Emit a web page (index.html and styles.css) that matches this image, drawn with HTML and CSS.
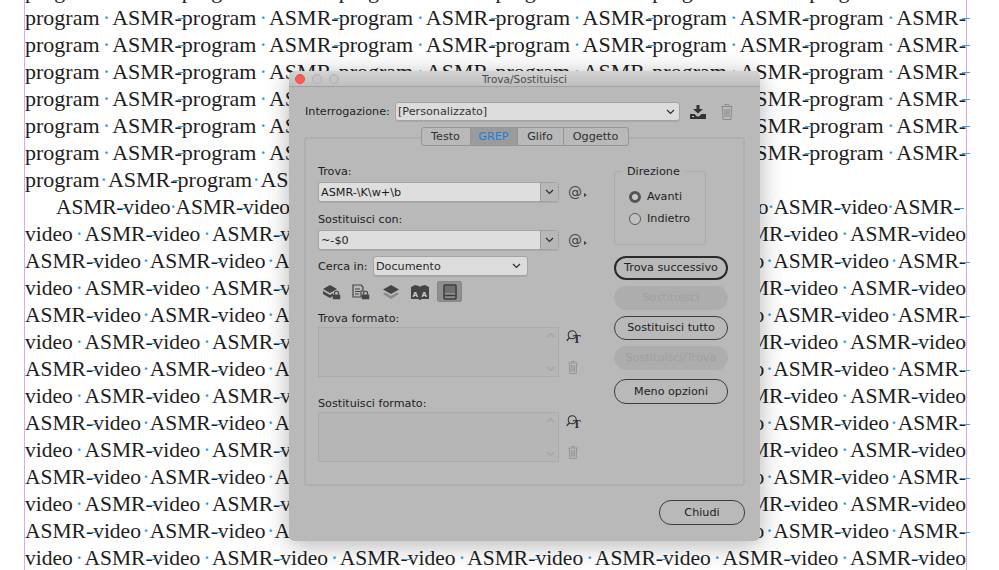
FILE: index.html
```html
<!DOCTYPE html>
<html lang="it">
<head>
<meta charset="utf-8">
<title>Trova/Sostituisci</title>
<link rel="stylesheet" href="styles.css">
</head>
<body>
<svg class="defs" aria-hidden="true">
  <symbol id="trash" viewBox="0 0 12 16"><path d="M4 1.5V.6h4v.9M.5 2.5h11M1.5 2.5l.5 13h8l.5-13M4 5v8M6 5v8M8 5v8" fill="none" stroke="currentColor" stroke-width="1"/></symbol>
  <symbol id="chev" viewBox="0 0 9 6"><path d="M1 1l3.5 3.5L8 1" fill="none" stroke="currentColor" stroke-width="1.2"/></symbol>
  <symbol id="findt" viewBox="0 0 18 16"><circle cx="7" cy="6" r="4.5" fill="none" stroke="currentColor" stroke-width="1.2"/><path d="M3.8 9.4L.8 13" stroke="currentColor" stroke-width="1.4"/><text x="8" y="15" font-family="Liberation Serif, serif" font-size="13" font-weight="700" fill="currentColor">T</text></symbol>
  <symbol id="lock" viewBox="0 0 8 9"><path d="M2 4V2.6a2 2 0 0 1 4 0V4" fill="none" stroke="currentColor" stroke-width="1.2"/><rect y="4" width="8" height="5" rx=".6" fill="currentColor"/></symbol>
</svg>

<div class="page">
  <div class="copy">
    <p class="ln">program <i>·</i> ASMR<b>-</b>program <i>·</i> ASMR<b>-</b>program <i>·</i> ASMR<b>-</b>program <i>·</i> ASMR<b>-</b>program <i>·</i> ASMR<b>-</b>program <i>·</i> ASMR<b>-</b></p>
    <p class="ln">program <i>·</i> ASMR<b>-</b>program <i>·</i> ASMR<b>-</b>program <i>·</i> ASMR<b>-</b>program <i>·</i> ASMR<b>-</b>program <i>·</i> ASMR<b>-</b>program <i>·</i> ASMR<b>-</b></p>
    <p class="ln">program <i>·</i> ASMR<b>-</b>program <i>·</i> ASMR<b>-</b>program <i>·</i> ASMR<b>-</b>program <i>·</i> ASMR<b>-</b>program <i>·</i> ASMR<b>-</b>program <i>·</i> ASMR<b>-</b></p>
    <p class="ln">program <i>·</i> ASMR<b>-</b>program <i>·</i> ASMR<b>-</b>program <i>·</i> ASMR<b>-</b>program <i>·</i> ASMR<b>-</b>program <i>·</i> ASMR<b>-</b>program <i>·</i> ASMR<b>-</b></p>
    <p class="ln">program <i>·</i> ASMR<b>-</b>program <i>·</i> ASMR<b>-</b>program <i>·</i> ASMR<b>-</b>program <i>·</i> ASMR<b>-</b>program <i>·</i> ASMR<b>-</b>program <i>·</i> ASMR<b>-</b></p>
    <p class="ln">program <i>·</i> ASMR<b>-</b>program <i>·</i> ASMR<b>-</b>program <i>·</i> ASMR<b>-</b>program <i>·</i> ASMR<b>-</b>program <i>·</i> ASMR<b>-</b>program <i>·</i> ASMR<b>-</b></p>
    <p class="ln">program <i>·</i> ASMR<b>-</b>program <i>·</i> ASMR<b>-</b>program <i>·</i> ASMR<b>-</b>program <i>·</i> ASMR<b>-</b>program <i>·</i> ASMR<b>-</b>program <i>·</i> ASMR<b>-</b></p>
    <p class="ln short">program<i>·</i>ASMR<b>-</b>program<i>·</i>ASMR<b>-</b>program</p>
    <p class="ln tight">ASMR<b>-</b>video<i>·</i>ASMR<b>-</b>video<i>·</i>ASMR<b>-</b>video<i>·</i>ASMR<b>-</b>video<i>·</i>ASMR<b>-</b>video<i>·</i>ASMR<b>-</b>video<i>·</i>ASMR<b>-</b>video<i>·</i>ASMR<b>-</b></p>
    <p class="ln">video <i>·</i> ASMR<b>-</b>video <i>·</i> ASMR<b>-</b>video <i>·</i> ASMR<b>-</b>video <i>·</i> ASMR<b>-</b>video <i>·</i> ASMR<b>-</b>video <i>·</i> ASMR<b>-</b>video <i>·</i> ASMR<b>-</b>video</p>
    <p class="ln">ASMR<b>-</b>video <i>·</i> ASMR<b>-</b>video <i>·</i> ASMR<b>-</b>video <i>·</i> ASMR<b>-</b>video <i>·</i> ASMR<b>-</b>video <i>·</i> ASMR<b>-</b>video <i>·</i> ASMR<b>-</b>video <i>·</i> ASMR<b>-</b></p>
    <p class="ln">video <i>·</i> ASMR<b>-</b>video <i>·</i> ASMR<b>-</b>video <i>·</i> ASMR<b>-</b>video <i>·</i> ASMR<b>-</b>video <i>·</i> ASMR<b>-</b>video <i>·</i> ASMR<b>-</b>video <i>·</i> ASMR<b>-</b>video</p>
    <p class="ln">ASMR<b>-</b>video <i>·</i> ASMR<b>-</b>video <i>·</i> ASMR<b>-</b>video <i>·</i> ASMR<b>-</b>video <i>·</i> ASMR<b>-</b>video <i>·</i> ASMR<b>-</b>video <i>·</i> ASMR<b>-</b>video <i>·</i> ASMR<b>-</b></p>
    <p class="ln">video <i>·</i> ASMR<b>-</b>video <i>·</i> ASMR<b>-</b>video <i>·</i> ASMR<b>-</b>video <i>·</i> ASMR<b>-</b>video <i>·</i> ASMR<b>-</b>video <i>·</i> ASMR<b>-</b>video <i>·</i> ASMR<b>-</b>video</p>
    <p class="ln">ASMR<b>-</b>video <i>·</i> ASMR<b>-</b>video <i>·</i> ASMR<b>-</b>video <i>·</i> ASMR<b>-</b>video <i>·</i> ASMR<b>-</b>video <i>·</i> ASMR<b>-</b>video <i>·</i> ASMR<b>-</b>video <i>·</i> ASMR<b>-</b></p>
    <p class="ln">video <i>·</i> ASMR<b>-</b>video <i>·</i> ASMR<b>-</b>video <i>·</i> ASMR<b>-</b>video <i>·</i> ASMR<b>-</b>video <i>·</i> ASMR<b>-</b>video <i>·</i> ASMR<b>-</b>video <i>·</i> ASMR<b>-</b>video</p>
    <p class="ln">ASMR<b>-</b>video <i>·</i> ASMR<b>-</b>video <i>·</i> ASMR<b>-</b>video <i>·</i> ASMR<b>-</b>video <i>·</i> ASMR<b>-</b>video <i>·</i> ASMR<b>-</b>video <i>·</i> ASMR<b>-</b>video <i>·</i> ASMR<b>-</b></p>
    <p class="ln">video <i>·</i> ASMR<b>-</b>video <i>·</i> ASMR<b>-</b>video <i>·</i> ASMR<b>-</b>video <i>·</i> ASMR<b>-</b>video <i>·</i> ASMR<b>-</b>video <i>·</i> ASMR<b>-</b>video <i>·</i> ASMR<b>-</b>video</p>
    <p class="ln">ASMR<b>-</b>video <i>·</i> ASMR<b>-</b>video <i>·</i> ASMR<b>-</b>video <i>·</i> ASMR<b>-</b>video <i>·</i> ASMR<b>-</b>video <i>·</i> ASMR<b>-</b>video <i>·</i> ASMR<b>-</b>video <i>·</i> ASMR<b>-</b></p>
    <p class="ln">video <i>·</i> ASMR<b>-</b>video <i>·</i> ASMR<b>-</b>video <i>·</i> ASMR<b>-</b>video <i>·</i> ASMR<b>-</b>video <i>·</i> ASMR<b>-</b>video <i>·</i> ASMR<b>-</b>video <i>·</i> ASMR<b>-</b>video</p>
    <p class="ln">ASMR<b>-</b>video <i>·</i> ASMR<b>-</b>video <i>·</i> ASMR<b>-</b>video <i>·</i> ASMR<b>-</b>video <i>·</i> ASMR<b>-</b>video <i>·</i> ASMR<b>-</b>video <i>·</i> ASMR<b>-</b>video <i>·</i> ASMR<b>-</b></p>
    <p class="ln">video <i>·</i> ASMR<b>-</b>video <i>·</i> ASMR<b>-</b>video <i>·</i> ASMR<b>-</b>video <i>·</i> ASMR<b>-</b>video <i>·</i> ASMR<b>-</b>video <i>·</i> ASMR<b>-</b>video <i>·</i> ASMR<b>-</b>video</p>
  </div>
</div>

<section class="dialog">
  <header class="titlebar">
    <span class="light red"></span><span class="light"></span><span class="light"></span>
    <span class="title">Trova/Sostituisci</span>
  </header>

  <div class="query">
    <span class="query-label">Interrogazione:</span>
    <div class="select query-select"><span>[Personalizzato]</span><svg class="chev"><use href="#chev"/></svg></div>
    <svg class="save" viewBox="0 0 16 14"><path d="M6.500 0h3v4H13L8 8.500 3 4h3.500z" fill="currentColor"/><path d="M0 9h4.500L7 11.500h2L11.500 9H16v5H0z" fill="currentColor"/><rect x="2" y="11" width="2" height="1" fill="#cfcfcf"/></svg>
    <svg class="query-trash"><use href="#trash"/></svg>
  </div>

  <nav class="tabs">
    <span class="tab t1">Testo</span>
    <span class="tab t2 on">GREP</span>
    <span class="tab t3">Glifo</span>
    <span class="tab t4">Oggetto</span>
  </nav>

  <div class="panel">
    <div class="left">
      <div class="lbl">Trova:</div>
      <div class="field"><div class="combo"><span class="combo-text">ASMR-\K\w+\b</span><span class="combo-btn"><svg class="chev"><use href="#chev"/></svg></span></div><span class="at">@<em></em></span></div>

      <div class="lbl lbl-sub">Sostituisci con:</div>
      <div class="field"><div class="combo"><span class="combo-text">~-$0</span><span class="combo-btn"><svg class="chev"><use href="#chev"/></svg></span></div><span class="at">@<em></em></span></div>

      <div class="search-in">
        <span>Cerca in:</span>
        <div class="select scope-select"><span>Documento</span><svg class="chev"><use href="#chev"/></svg></div>
      </div>

      <div class="scopes">
        <span class="scope"><svg viewBox="0 0 18 16"><path d="M0 5l7-4 7 4-7 4z" fill="currentColor"/><path d="M0 7l7 4 3-1.700V12L7 14 0 10z" fill="currentColor"/><g transform="translate(9.500 6.500)"><use href="#lock" width="8" height="9"/></g></svg></span>
        <span class="scope"><svg viewBox="0 0 18 16"><path d="M1 1h8l2 2v4H9v6H1z" fill="none" stroke="currentColor" stroke-width="1.200"/><path d="M3 5h5M3 7.500h5M3 10h4" stroke="currentColor"/><g transform="translate(9.500 6.500)"><use href="#lock" width="8" height="9"/></g></svg></span>
        <span class="scope"><svg viewBox="0 0 18 16"><path d="M9 1l8 4.500L9 10 1 5.500z" fill="currentColor"/><path d="M3 8.500L1 10l8 5 8-5-2-1.500-6 3.500z" fill="#8a8a8a"/></svg></span>
        <span class="scope"><svg viewBox="0 0 18 16"><path d="M0 3l4-2 4 1 1 1 1-1 4-1 4 2v12h-7l-2 1-2-1H0z" fill="currentColor"/><text x="1.500" y="12.500" class="mini">A</text><text x="10.500" y="12.500" class="mini">A</text></svg></span>
        <span class="scope active"><svg viewBox="0 0 14 16"><rect x="1" y="1" width="12" height="14" rx="1" fill="none" stroke="currentColor" stroke-width="1.500"/><rect x="2" y="2" width="10" height="7" fill="#6e6e6e"/><path d="M2 11.500h10" stroke="currentColor" stroke-width="1.500"/></svg></span>
      </div>

      <div class="lbl lbl-fmt">Trova formato:</div>
      <div class="field fmt-field">
        <div class="fmt-box"><svg class="up"><use href="#chev"/></svg><svg class="down"><use href="#chev"/></svg></div>
        <div class="fmt-tools"><svg class="find"><use href="#findt"/></svg><svg class="mini-trash"><use href="#trash"/></svg></div>
      </div>

      <div class="lbl lbl-fmt2">Sostituisci formato:</div>
      <div class="field fmt-field">
        <div class="fmt-box"><svg class="up"><use href="#chev"/></svg><svg class="down"><use href="#chev"/></svg></div>
        <div class="fmt-tools"><svg class="find"><use href="#findt"/></svg><svg class="mini-trash"><use href="#trash"/></svg></div>
      </div>
    </div>

    <div class="right">
      <fieldset class="dir">
        <legend>Direzione</legend>
        <div class="radio"><span class="dot sel"></span>Avanti</div>
        <div class="radio"><span class="dot"></span>Indietro</div>
      </fieldset>
      <div class="btns">
        <button class="btn primary">Trova successivo</button>
        <button class="btn off">Sostituisci</button>
        <button class="btn">Sostituisci tutto</button>
        <button class="btn off">Sostituisci/Trova</button>
        <button class="btn more">Meno opzioni</button>
      </div>
    </div>
  </div>

  <footer class="foot"><button class="btn close">Chiudi</button></footer>
</section>
</body>
</html>
```

FILE: styles.css
```css
* { box-sizing: border-box; }
html, body { margin: 0; height: 100%; overflow: hidden; background: #fff; }
.defs { width: 0; height: 0; display: block; }

.page {
  height: 570px;
  width: 943px;
  margin-left: 24px;
  border-left: 1px solid #d9a8f7;
  border-right: 1px solid #d9a8f7;
}
.copy {
  font: 22px/27px "Liberation Serif", serif;
  color: #1d1d1d;
  word-spacing: -5.4px;
  transform: translateY(-23px);
}
.ln {
  margin: 0;
  height: 27px;
  text-align: justify;
  text-align-last: justify;
}
.ln:nth-child(n+9) { font-size: 21.5px; padding-top: 1px; }
.ln.short { text-align-last: left; }
.ln.short i { margin: 0 1.5px; }
.ln.tight { padding-left: 31px; text-align-last: left; letter-spacing: -.15px; white-space: nowrap; }
.ln i { font-style: normal; font-weight: 700; font-size: 16px; line-height: 1; color: #2f9be8; position: relative; top: -2px; }
.ln b { font-weight: 400; position: relative; }
.ln b::after {
  content: "";
  position: absolute;
  left: 3px;
  top: 13px;
  width: 8px;
  height: 1px;
  background: #3aa0e8;
}

.dialog {
  position: absolute;
  left: 289px;
  top: 71px;
  width: 471px;
  height: 470px;
  background: #b9b9b9;
  border-radius: 6px;
  box-shadow: 0 4px 24px rgba(0, 0, 0, .3);
  font: 11.2px/14px "DejaVu Sans", sans-serif;
  color: #1e1e1e;
}
.titlebar {
  height: 16px;
  display: flex;
  align-items: center;
  gap: 7px;
  padding-left: 6px;
  position: relative;
  background: linear-gradient(#d4d4d4, #bebebe);
  border-bottom: 1px solid #a2a2a2;
  border-radius: 6px 6px 0 0;
}
.light { width: 10px; height: 10px; border-radius: 50%; background: #c4c4c4; border: 1px solid #b0b0b0; }
.light.red { background: #fb5c57; border-color: #ec4a45; }
.title {
  position: absolute;
  left: 0;
  right: 0;
  padding-top: 1px;
  text-align: center;
  font-size: 10.5px;
  color: #4b4b4b;
  pointer-events: none;
}

.query {
  display: flex;
  align-items: center;
  height: 19px;
  margin-top: 15px;
  padding-left: 16px;
}
.query-label { width: 90px; padding-top: 1px; }
.select {
  height: 19px;
  display: flex;
  align-items: center;
  justify-content: space-between;
  padding: 0 4px 0 2px;
  background: #dcdcdc;
  border: 1px solid #a4a4a4;
  border-radius: 3px;
  box-shadow: 0 1px 0 #a9a9a9;
}
.select span { padding-top: 1px; }
.query-select { width: 285px; color: #333; }
.chev { width: 9px; height: 6px; color: #2c2c2c; flex: none; }
.save { width: 16px; height: 14px; margin-left: 10px; color: #333; }
.query-trash { width: 12px; height: 16px; margin-left: 15px; color: #8a8a8a; }

.tabs {
  display: flex;
  justify-content: center;
  height: 19px;
  margin-top: 6px;
  margin-bottom: -9px;
  position: relative;
  z-index: 1;
}
.tab {
  display: flex;
  align-items: center;
  justify-content: center;
  padding-top: 1px;
  background: #b9b9b9;
  border: 1px solid #959595;
  border-left-width: 0;
  color: #303030;
}
.t1 { width: 50px; border-left-width: 1px; border-radius: 3px 0 0 3px; }
.t2 { width: 47px; }
.t3 { width: 46px; }
.t4 { width: 65px; border-radius: 0 3px 3px 0; }
.tab.on { background: #9b9b9b; color: #1c80dc; }

.panel {
  width: 441px;
  height: 349px;
  margin-left: 15px;
  padding: 25px 0 0 12px;
  display: flex;
  border: 2px solid #afafaf;
  border-radius: 3px;
}
.left { width: 296px; flex: none; }
.lbl { height: 14px; line-height: 16px; margin-bottom: 4px; }
.lbl-sub { margin-top: 10px; margin-bottom: 4px; }
.lbl-fmt { margin-top: 9px; margin-bottom: 2px; }
.lbl-fmt2 { margin-top: 19px; margin-bottom: 2px; }

.field { display: flex; align-items: center; }
.combo {
  width: 241px;
  height: 20px;
  display: flex;
  background: #dedede;
  border: 1px solid #a4a4a4;
  border-radius: 3px;
  box-shadow: 0 1px 0 #aaa;
}
.combo-text { flex: 1; padding-left: 2px; line-height: 20px; color: #1b1b1b; }
.combo-btn {
  width: 18px;
  display: flex;
  align-items: center;
  justify-content: center;
  background: #b7b7b7;
  border-left: 1px solid #9c9c9c;
  border-radius: 0 2px 2px 0;
}
.at {
  width: 27px;
  padding-left: 9px;
  font-size: 14px;
  line-height: 18px;
  color: #444;
  position: relative;
}
.at em {
  position: absolute;
  left: 25px;
  top: 10px;
  border-left: 3px solid #444;
  border-top: 2px solid transparent;
  border-bottom: 2px solid transparent;
}

.search-in {
  display: flex;
  align-items: center;
  margin-top: 6px;
  height: 20px;
}
.search-in > span { width: 55px; padding-top: 1px; }
.scope-select { width: 155px; height: 20px; color: #2a2a2a; padding-right: 6px; }

.scopes {
  display: flex;
  align-items: center;
  height: 21px;
  margin-top: 5px;
  margin-left: 1px;
}
.scope {
  width: 25px;
  height: 21px;
  margin-right: 4.5px;
  display: flex;
  align-items: center;
  justify-content: center;
  color: #444;
  border-radius: 2px;
}
.scope svg { width: 18px; height: 16px; flex: none; }
.scope.active { background: #8f8f8f; border: 1px solid #878787; color: #3a3a3a; }
.scope.active svg { width: 14px; }
.mini { font: 700 7px "DejaVu Sans", sans-serif; fill: #cfcfcf; }

.fmt-field { align-items: stretch; height: 50px; }
.fmt-box {
  width: 241px;
  position: relative;
  background: #b6b6b6;
  border: 1px solid #ababab;
  color: #a3a3a3;
}
.fmt-box svg { position: absolute; right: 3px; width: 9px; height: 6px; }
.up { top: 4px; transform: scaleY(-1); }
.down { bottom: 4px; }
.fmt-tools {
  display: flex;
  flex-direction: column;
  align-items: flex-start;
  padding: 2px 0 0 7px;
}
.find { width: 16px; height: 15px; color: #2f2f2f; }
.mini-trash { width: 10px; height: 13px; margin: 17px 0 0 2px; color: #8c8c8c; }

.right { width: 114px; flex: none; }
.dir {
  margin: 0;
  width: 92px;
  height: 81px;
  padding: 0 0 0 14px;
  border: 1px solid #ababab;
  border-radius: 3px;
}
.dir legend { padding: 0 5px; margin-left: -7px; height: 14px; line-height: 16px; }
.radio { display: flex; align-items: center; gap: 6px; height: 14px; margin-top: 8px; }
.radio:first-of-type { margin-top: 12px; }
.dot {
  width: 12px;
  height: 12px;
  border-radius: 50%;
  border: 1px solid #5a5a5a;
  background: #c2c2c2;
}
.dot.sel { border: 3.5px solid #555; background: #c8c8c8; }

.btns { display: flex; flex-direction: column; gap: 6px; margin-top: 11px; }
.btn {
  width: 114px;
  height: 24px;
  padding: 0;
  background: transparent;
  border: 1px solid #3c3c3c;
  border-radius: 12px;
  font: 11.2px/14px "DejaVu Sans", sans-serif;
  color: #222;
}
.primary { border-width: 2px; border-color: #2a2a2a; }
.off { background: #adadad; border-color: #adadad; color: #a0a0a0; }
.more { margin-top: 3px; height: 25px; }

.foot { display: flex; justify-content: flex-end; padding: 14px 15px 0 0; }
.close { width: 86px; height: 25px; padding-top: 1px; }
```
